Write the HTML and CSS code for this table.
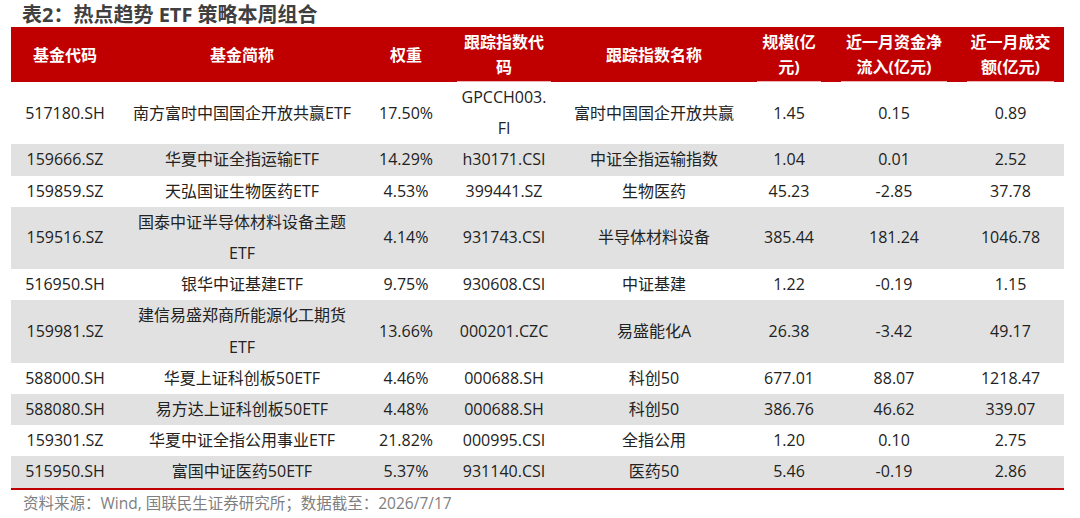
FILE: index.html
```html
<!DOCTYPE html>
<html lang="zh-CN">
<head>
<meta charset="utf-8">
<title>表2：热点趋势 ETF 策略本周组合</title>
<link rel="stylesheet" href="styles.css">
</head>
<body>
<div class="page">
  <h1 class="title">表2：热点趋势 ETF 策略本周组合</h1>
  <table class="etf">
    <colgroup>
      <col class="c1"><col class="c2"><col class="c3"><col class="c4">
      <col class="c5"><col class="c6"><col class="c7"><col class="c8">
    </colgroup>
    <thead>
      <tr>
        <th>基金代码</th>
        <th>基金简称</th>
        <th>权重</th>
        <th class="ul">跟踪指数代<br>码</th>
        <th>跟踪指数名称</th>
        <th class="ul">规模(亿<br>元)</th>
        <th class="ul">近一月资金净<br>流入(亿元)</th>
        <th class="ul">近一月成交<br>额(亿元)</th>
      </tr>
    </thead>
    <tbody>
      <tr><td>517180.SH</td><td>南方富时中国国企开放共赢ETF</td><td>17.50%</td><td>GPCCH003.<br>FI</td><td>富时中国国企开放共赢</td><td>1.45</td><td>0.15</td><td>0.89</td></tr>
      <tr><td>159666.SZ</td><td>华夏中证全指运输ETF</td><td>14.29%</td><td>h30171.CSI</td><td>中证全指运输指数</td><td>1.04</td><td>0.01</td><td>2.52</td></tr>
      <tr><td>159859.SZ</td><td>天弘国证生物医药ETF</td><td>4.53%</td><td>399441.SZ</td><td>生物医药</td><td>45.23</td><td>-2.85</td><td>37.78</td></tr>
      <tr><td>159516.SZ</td><td>国泰中证半导体材料设备主题<br>ETF</td><td>4.14%</td><td>931743.CSI</td><td>半导体材料设备</td><td>385.44</td><td>181.24</td><td>1046.78</td></tr>
      <tr><td>516950.SH</td><td>银华中证基建ETF</td><td>9.75%</td><td>930608.CSI</td><td>中证基建</td><td>1.22</td><td>-0.19</td><td>1.15</td></tr>
      <tr><td>159981.SZ</td><td>建信易盛郑商所能源化工期货<br>ETF</td><td>13.66%</td><td>000201.CZC</td><td>易盛能化A</td><td>26.38</td><td>-3.42</td><td>49.17</td></tr>
      <tr><td>588000.SH</td><td>华夏上证科创板50ETF</td><td>4.46%</td><td>000688.SH</td><td>科创50</td><td>677.01</td><td>88.07</td><td>1218.47</td></tr>
      <tr><td>588080.SH</td><td>易方达上证科创板50ETF</td><td>4.48%</td><td>000688.SH</td><td>科创50</td><td>386.76</td><td>46.62</td><td>339.07</td></tr>
      <tr><td>159301.SZ</td><td>华夏中证全指公用事业ETF</td><td>21.82%</td><td>000995.CSI</td><td>全指公用</td><td>1.20</td><td>0.10</td><td>2.75</td></tr>
      <tr><td>515950.SH</td><td>富国中证医药50ETF</td><td>5.37%</td><td>931140.CSI</td><td>医药50</td><td>5.46</td><td>-0.19</td><td>2.86</td></tr>
    </tbody>
  </table>
  <p class="source">资料来源：Wind, 国联民生证券研究所；数据截至：2026/7/17</p>
</div>
</body>
</html>
```

FILE: styles.css
```css
* { box-sizing: border-box; }

html, body {
  margin: 0;
  padding: 0;
  background: #ffffff;
}

body {
  font-family: "Open Sans", "Noto Sans CJK SC", sans-serif;
  color: #222222;
}

.page {
  padding: 3px 16px 0 11px;
}

.title {
  margin: 0 0 0 11px;
  font-size: 20px;
  line-height: 24px;
  font-weight: 700;
  color: #404040;
}

.etf {
  width: 1053px;
  table-layout: fixed;
  border-collapse: collapse;
  border-bottom: 2px solid #c00000;
}

.c1 { width: 108px; }
.c2 { width: 246px; }
.c3 { width: 82px; }
.c4 { width: 114px; }
.c5 { width: 186px; }
.c6 { width: 84px; }
.c7 { width: 126px; }
.c8 { width: 107px; }

.etf th {
  background: #c00000;
  color: #ffffff;
  font-size: 16px;
  font-weight: 700;
  line-height: 25px;
  padding: 3px 0 2px;
  text-align: center;
  vertical-align: middle;
  white-space: nowrap;
}

.etf th.ul {
  background-image: linear-gradient(#eab4b4, #eab4b4);
  background-repeat: no-repeat;
  background-position: center bottom;
  background-size: calc(100% - 20px) 1px;
}

.etf td {
  font-size: 16px;
  line-height: 31.2px;
  padding: 0;
  text-align: center;
  vertical-align: middle;
  white-space: nowrap;
}

.etf tbody tr:nth-child(even) td {
  background: #e1e1e1;
}

.source {
  margin: 3px 0 0 12px;
  font-size: 15.5px;
  line-height: 20px;
  color: #7f7f7f;
}
```
